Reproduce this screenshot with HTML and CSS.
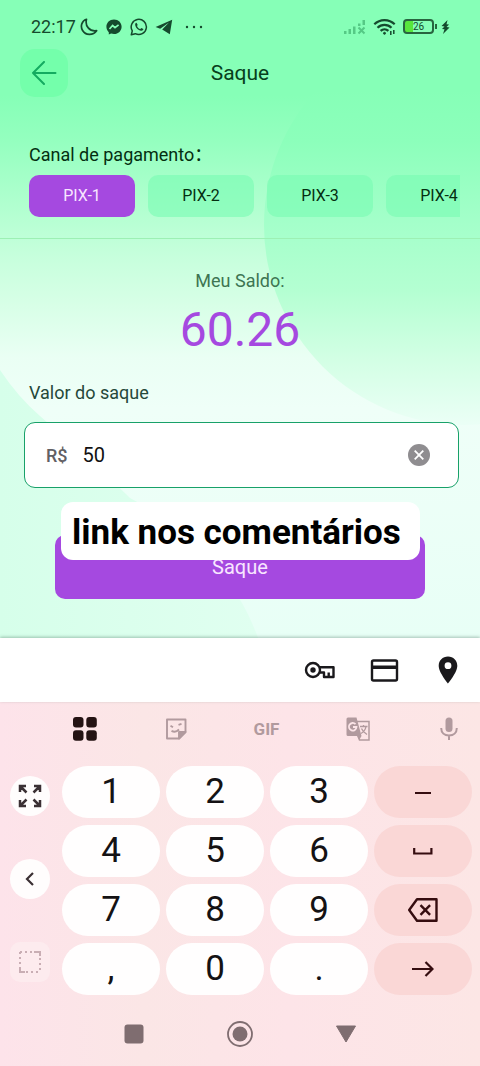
FILE: index.html
```html
<!DOCTYPE html>
<html lang="pt-BR">
<head>
<meta charset="utf-8">
<meta name="viewport" content="width=device-width, initial-scale=1">
<title>Saque</title>
<link rel="stylesheet" href="styles.css">
</head>
<body>
<div class="screen">
  <main class="app">
    <svg class="backdrop" viewBox="0 0 480 638" preserveAspectRatio="none" aria-hidden="true">
      <defs>
        <linearGradient id="orb" gradientUnits="userSpaceOnUse" x1="0" y1="90" x2="0" y2="425">
          <stop offset="0" stop-color="#86ffb7"/>
          <stop offset=".15" stop-color="#8cffbb"/>
          <stop offset=".4" stop-color="#a4ffca"/>
          <stop offset=".6" stop-color="#b4ffd2"/>
          <stop offset=".8" stop-color="#d2ffe4"/>
          <stop offset="1" stop-color="#ebfff6"/>
        </linearGradient>
        <linearGradient id="wave" x1="0" y1="0" x2="1" y2="0">
          <stop offset="0" stop-color="#d6ffea"/>
          <stop offset="1" stop-color="#e0fff0"/>
        </linearGradient>
      </defs>
      <circle cx="464" cy="225" r="200" fill="url(#orb)"/>
      <path d="M0 370Q18 397 40 416C75 446 110 478 130 498C190 530 238 580 258 638H0Z" fill="url(#wave)"/>
    </svg>

    <div class="status">
      <div class="status-group">
        <span class="clock">22:17</span>
        <svg width="18" height="18" viewBox="0 0 18 18" fill="none" stroke="currentColor" stroke-width="1.7" stroke-linejoin="round"><path d="M6.500 1.300C1.500 3 .2 8.500 2.600 12.500C5.500 17.400 13 17.800 16.600 12.700C9.500 13.800 4.800 8 6.500 1.300Z"/></svg>
        <svg class="gap-icon" width="16" height="16" viewBox="0 0 16 16"><path fill="currentColor" d="M8 .5C3.600.5.400 3.700.400 7.800c0 2.200.900 4.100 2.400 5.400v2.200l2.300-.8c.9.300 1.900.5 2.900.5 4.400 0 7.600-3.200 7.600-7.300S12.400.5 8 .5Z"/><path d="M3.500 10 6.600 6.500 9 8.700 12.600 5.800" fill="none" stroke="#88ffb8" stroke-width="1.700"/></svg>
        <svg class="gap-icon" width="18" height="18" viewBox="0 0 18 18"><path d="M1.300 16.700 2.300 12.900A7.600 7.600 0 1 1 5.300 15.700Z" fill="none" stroke="currentColor" stroke-width="1.500" stroke-linejoin="round"/><path d="M6.500 4.700c-1 .2-1.500 1.100-1.300 2.400.5 2.900 3 5.400 5.900 5.700 1.300.1 2.200-.5 2.300-1.700l-2.100-1.100-1 1.100C8.700 10.500 7.600 9.300 7 7.900l.7-1Z" fill="currentColor"/></svg>
        <svg class="telegram" width="18" height="16" viewBox="0 0 18 16"><path fill="currentColor" d="M17.200.7.600 8.100l4.600 1.600L14 3.500 7.200 10.600l7.600 4.700Z"/></svg>
        <svg class="dots" width="18" height="4" viewBox="0 0 18 4" fill="currentColor"><circle cx="2" cy="2" r="1.200"/><circle cx="9" cy="2" r="1.200"/><circle cx="16" cy="2" r="1.200"/></svg>
      </div>
      <div class="status-group">
        <svg class="signal" width="24" height="16" viewBox="0 0 24 16" fill="currentColor"><path d="M1 12h2.500v3H1zM5.500 10H8v5H5.500zM10 7.500h2.500V15H10zM15 4.500h2.500V7H15zM19.500 1H22v5h-2.500z"/><path d="m15.500 8.500 6 6m0-6-6 6" stroke="currentColor" stroke-width="2"/></svg>
        <svg class="wifi" width="24" height="18" viewBox="0 0 24 18" fill="none" stroke="currentColor" stroke-width="2.200"><path d="M1.300 6.300a14.500 14.500 0 0 1 20.400 0M4.500 9.700a10 10 0 0 1 14 0M7.600 12.900a5.600 5.600 0 0 1 7.800 0"/><circle cx="11.500" cy="15.300" r="1" fill="currentColor" stroke-width="1"/><path d="M17.800 13v4m3-5v4" stroke-width="1.500"/></svg>
        <span class="battery"><span class="battery-level">26</span></span>
        <svg class="bolt" width="9" height="14" viewBox="0 0 9 14"><path fill="currentColor" d="M6.500 0 .500 6l3 .6L1 9l2.500.2L2 14l6.500-6.500-3-.5L8 4.500l-2.500-.3Z"/></svg>
      </div>
    </div>

    <header class="topbar">
      <button class="back" type="button" aria-label="Voltar">
        <svg width="26" height="24" viewBox="0 0 26 24" fill="none" stroke="currentColor" stroke-width="2" stroke-linecap="round" stroke-linejoin="round"><path d="M24.500 12H2M13 1 2 12l11 11"/></svg>
      </button>
      <h1 class="title">Saque</h1>
    </header>

    <section class="channels">
      <h2 class="label channel-label">Canal de pagamento<span class="colon" lang="zh-CN">：</span></h2>
      <div class="chips">
        <button class="chip chip-active" type="button">PIX-1</button>
        <button class="chip" type="button">PIX-2</button>
        <button class="chip" type="button">PIX-3</button>
        <button class="chip" type="button">PIX-4</button>
      </div>
    </section>

    <section class="balance">
      <p class="balance-label">Meu Saldo:</p>
      <p class="balance-value">60.26</p>
    </section>

    <form class="withdraw">
      <label class="label amount-label" for="amount">Valor do saque</label>
      <div class="field">
        <span class="currency">R$</span>
        <input class="amount" id="amount" type="text" inputmode="decimal" value="50">
        <button class="clear" type="button" aria-label="Limpar">
          <svg width="22" height="22" viewBox="0 0 22 22"><circle cx="11" cy="11" r="11" fill="#8f8d90"/><path d="m6.700 6.700 8.600 8.600m0-8.600-8.600 8.600" stroke="#fff" stroke-width="1.800"/></svg>
        </button>
      </div>
      <div class="submit-area">
        <button class="submit" type="button">Saque</button>
        <p class="caption">link nos comentários</p>
      </div>
    </form>
  </main>

  <div class="autofill">
    <button class="bare" type="button" aria-label="Senhas">
      <svg width="32" height="32" viewBox="0 0 32 32" fill="none" stroke="currentColor" stroke-width="2.400" stroke-linejoin="round"><path d="M15.300 13.300H29.500V23H20v-4.500h-4.700M24.700 22.500v-4"/><circle cx="9" cy="16" r="7"/><circle cx="9" cy="16" r="2.700" fill="currentColor" stroke="none"/></svg>
    </button>
    <button class="bare" type="button" aria-label="Cartões">
      <svg width="32" height="32" viewBox="0 0 32 32"><rect x="4" y="6.500" width="25" height="20" rx="1.500" fill="none" stroke="currentColor" stroke-width="2.400"/><path d="M4 11.500h25v3.500H4z" fill="currentColor"/></svg>
    </button>
    <button class="bare" type="button" aria-label="Endereços">
      <svg width="32" height="32" viewBox="0 0 32 32"><path fill="currentColor" fill-rule="evenodd" d="M16 2.500c-5.400 0-9.300 4-9.300 9.200C6.700 18.500 16 29.500 16 29.500s9.300-11 9.300-17.800c0-5.200-3.900-9.200-9.300-9.200Zm0 5.800a3.400 3.400 0 1 1 0 6.800 3.400 3.400 0 0 1 0-6.800Z"/></svg>
    </button>
  </div>

  <section class="keyboard" aria-label="Teclado">
    <div class="tools">
      <button class="bare tool-on" type="button" aria-label="Menu">
        <svg width="24" height="24" viewBox="0 0 24 24" fill="currentColor"><rect width="10.500" height="10.500" rx="3"/><rect x="13.300" width="10.500" height="10.500" rx="3"/><rect y="13.300" width="10.500" height="10.500" rx="3"/><rect x="13.300" y="13.300" width="10.500" height="10.500" rx="3"/></svg>
      </button>
      <button class="bare" type="button" aria-label="Figurinhas">
        <svg width="22" height="22" viewBox="0 0 22 22" fill="none" stroke="currentColor" stroke-width="1.900" stroke-linejoin="round"><path d="M2 1.500h18.500V14L14 20.500H2Z"/><path d="M20.500 14H14v6.500Z" fill="currentColor"/><path d="M5.500 7.800 8 9.300M13.500 6.800l3-1M6.500 12.800c3 1.600 5.500.8 7.500-1.300"/></svg>
      </button>
      <button class="bare gif" type="button">GIF</button>
      <button class="bare" type="button" aria-label="Traduzir">
        <svg width="24" height="24" viewBox="0 0 24 24"><path d="M9 4.500h14V23H13.500L11 17" fill="none" stroke="currentColor" stroke-width="1.500"/><path fill="currentColor" d="M2 .5h8.500L15.500 19H2A1.500 1.500 0 0 1 .500 17.500V2A1.500 1.500 0 0 1 2 .5ZM11.500 19h4l-2 3.500Z"/><path d="M9.500 7.200a3.800 3.800 0 1 0 1 2.800H7" fill="none" stroke="#fce5e8" stroke-width="1.800"/><path d="M14 9.500h7.500M17.500 8v1.500M20 9.500c-.5 3-2.500 5.500-5 7M15.500 11.500c1 2.500 3 4.500 5.500 6" fill="none" stroke="currentColor" stroke-width="1.300"/></svg>
      </button>
      <button class="bare" type="button" aria-label="Voz">
        <svg width="18" height="24" viewBox="0 0 18 24"><rect x="5.500" y=".5" width="7" height="14.500" rx="3.500" fill="currentColor"/><path d="M1.200 11c0 4.700 3.200 7.500 7.800 7.500s7.800-2.800 7.800-7.500M9 18.500V23" fill="none" stroke="currentColor" stroke-width="2"/></svg>
      </button>
    </div>

    <div class="pad">
      <div class="side">
        <button class="side-key" type="button" aria-label="Redimensionar">
          <svg width="24" height="24" viewBox="0 0 24 24" fill="none" stroke="currentColor" stroke-width="2.500"><path d="M2 8V2h6M2 2l6.500 6.500M16 2h6v6M22 2l-6.500 6.500M2 16v6h6M2 22l6.500-6.500M16 22h6v-6M22 22l-6.500-6.500"/></svg>
        </button>
        <button class="side-key" type="button" aria-label="Recolher">
          <svg width="10" height="14" viewBox="0 0 10 14" fill="none" stroke="currentColor" stroke-width="2.200"><path d="M8 1 2 7l6 6"/></svg>
        </button>
        <button class="side-key side-key-faint" type="button" aria-label="Flutuante">
          <svg width="24" height="24" viewBox="0 0 24 24" fill="none" stroke="currentColor" stroke-width="2"><path d="M2 2h14M2 2v14M8 22h14M22 8v14" stroke-dasharray="2 3"/><path d="M16 2h6v4M2 17v5h5"/></svg>
        </button>
      </div>
      <div class="keys">
        <button class="key" type="button">1</button>
        <button class="key" type="button">2</button>
        <button class="key" type="button">3</button>
        <button class="key key-fn" type="button" aria-label="Menos"><svg width="16" height="4" viewBox="0 0 16 4"><path d="M0 3h16" stroke="currentColor" stroke-width="2"/></svg></button>
        <button class="key" type="button">4</button>
        <button class="key" type="button">5</button>
        <button class="key" type="button">6</button>
        <button class="key key-fn" type="button" aria-label="Espaço"><svg width="20" height="8" viewBox="0 0 20 8" fill="none" stroke="currentColor" stroke-width="2.200"><path d="M1.200 1v5.500h17.200V1"/></svg></button>
        <button class="key" type="button">7</button>
        <button class="key" type="button">8</button>
        <button class="key" type="button">9</button>
        <button class="key key-fn" type="button" aria-label="Apagar"><svg width="30" height="24" viewBox="0 0 30 24" fill="none" stroke="currentColor" stroke-width="2.400" stroke-linejoin="round"><path d="M9 1.200h19.500v21.600H9L1.200 12ZM12.500 7.200l9.600 9.600m0-9.600-9.600 9.600"/></svg></button>
        <button class="key" type="button">,</button>
        <button class="key" type="button">0</button>
        <button class="key" type="button">.</button>
        <button class="key key-fn" type="button" aria-label="Avançar"><svg width="22" height="16" viewBox="0 0 22 16" fill="none" stroke="currentColor" stroke-width="2.200"><path d="M0 8h20.500M13.500 1l7 7-7 7"/></svg></button>
      </div>
    </div>

    <nav class="nav">
      <button class="bare" type="button" aria-label="Recentes"><svg width="20" height="20" viewBox="0 0 20 20"><rect x=".5" y=".5" width="19" height="19" rx="3" fill="currentColor"/></svg></button>
      <button class="bare" type="button" aria-label="Início"><svg width="26" height="26" viewBox="0 0 26 26"><circle cx="13" cy="13" r="12" fill="none" stroke="currentColor" stroke-width="1.800"/><circle cx="13" cy="13" r="7.500" fill="currentColor"/></svg></button>
      <button class="bare" type="button" aria-label="Ocultar teclado"><svg width="22" height="18" viewBox="0 0 22 18"><path d="M1.500 1h19L11 17Z" fill="currentColor" stroke="currentColor" stroke-linejoin="round"/></svg></button>
    </nav>
  </section>
</div>
</body>
</html>
```

FILE: styles.css
```css
* {
  box-sizing: border-box;
}

body {
  margin: 0;
  background: #fce5e8;
  font-family: Roboto, "Noto Sans CJK SC", sans-serif;
}

h1, h2, p {
  margin: 0;
  font-weight: 400;
}

button {
  border: 0;
  padding: 0;
  font-family: inherit;
  cursor: pointer;
}

svg {
  display: block;
  flex: none;
}

.screen {
  display: flex;
  flex-direction: column;
  min-height: 100vh;
}

.app {
  position: relative;
  z-index: 0;
  padding-bottom: 39px;
  background: linear-gradient(#86ffb7 15%, #94ffbf 22%, #b0ffcf 32%, #c6ffdc 40%, #d8ffe7 48%, #eafff4 56%, #effff8 64%, #e8fff6 100%);
}

.backdrop {
  position: absolute;
  inset: 0;
  z-index: -1;
  width: 100%;
  height: 100%;
}

.status {
  display: flex;
  justify-content: space-between;
  align-items: center;
  padding: 16px 30px 12px 31px;
  color: #154a2d;
}

.status-group {
  display: flex;
  align-items: center;
}

.clock {
  margin-right: 4px;
  font-size: 18px;
  line-height: 21px;
}

.gap-icon {
  margin-left: 8px;
}

.telegram {
  margin-left: 7px;
}

.dots {
  margin-left: 12px;
}

.signal {
  color: #55c985;
}

.wifi {
  margin-left: 6px;
}

.battery {
  position: relative;
  width: 31px;
  height: 15px;
  margin-left: 6px;
  border: 2px solid #28643f;
  border-radius: 4px;
  background: linear-gradient(90deg, #58e63c 8px, transparent 8px);
  text-align: center;
}

.battery::after {
  content: "";
  position: absolute;
  top: 3px;
  right: -5px;
  width: 2px;
  height: 5px;
  background: #28643f;
}

.battery-level {
  display: block;
  font-size: 10px;
  line-height: 11px;
}

.bolt {
  margin-left: 7px;
}

.topbar {
  display: grid;
  grid-template-columns: 48px 1fr 48px;
  align-items: center;
  padding: 0 20px;
}

.back {
  display: grid;
  place-items: center;
  height: 48px;
  border-radius: 15px;
  background: #74ffab;
  color: #14ab60;
}

.title {
  color: #06401c;
  font-size: 21px;
  line-height: 24px;
  text-align: center;
}

.channels {
  padding: 46px 20px 21px 29px;
  border-bottom: 1px solid #9df0b4;
}

.label {
  display: block;
  font-size: 18px;
  line-height: 24px;
}

.channel-label {
  color: #042e10;
}

.colon {
  font-family: "Noto Sans CJK SC", sans-serif;
  line-height: 1;
}

.chips {
  display: flex;
  gap: 13px;
  margin-top: 8px;
  overflow: hidden;
}

.chip {
  flex: none;
  width: 106px;
  height: 42px;
  padding-bottom: 2px;
  border-radius: 10px;
  background: rgba(120, 252, 178, .6);
  color: #042e10;
  font-size: 16px;
}

.chip-active {
  background: #a549e0;
  color: #f8e6ff;
}

.balance {
  padding-top: 31px;
  text-align: center;
}

.balance-label {
  color: #3d7552;
  font-size: 18px;
  line-height: 22px;
}

.balance-value {
  margin-top: 9px;
  color: #a549e0;
  font-size: 48px;
  line-height: 58px;
}

.withdraw {
  padding: 22px 21px 0 24px;
}

.amount-label {
  padding-left: 5px;
  color: #25483a;
}

.field {
  display: flex;
  align-items: center;
  height: 66px;
  margin-top: 17px;
  padding: 0 28px 0 21px;
  border: 1px solid #18a169;
  border-radius: 11px;
  background: #fff;
}

.currency {
  color: #626064;
  font-size: 18px;
  font-weight: 500;
}

.amount {
  flex: 1;
  min-width: 0;
  margin-left: 15px;
  padding: 0;
  border: 0;
  outline: 0;
  background: none;
  color: #111;
  font-family: inherit;
  font-size: 20px;
}

.clear {
  border-radius: 50%;
  background: none;
}

.submit-area {
  position: relative;
  margin: 47px 34px 0 31px;
}

.submit {
  display: block;
  width: 100%;
  height: 64px;
  border-radius: 10px;
  background: #a549e0;
  color: #f8e6ff;
  font-size: 20px;
}

.caption {
  position: absolute;
  top: -33px;
  left: 6px;
  right: 5px;
  padding: 3px 0 0 11px;
  border-radius: 12px;
  background: #fff;
  color: #000;
  font-size: 35px;
  font-weight: 700;
  line-height: 55px;
  white-space: nowrap;
}

.bare {
  display: grid;
  place-items: center;
  background: none;
  color: inherit;
}

.autofill {
  position: relative;
  display: flex;
  justify-content: flex-end;
  align-items: center;
  gap: 32px;
  height: 64px;
  padding-right: 16px;
  background: #fff;
  box-shadow: 0 -1px 3px rgba(40, 80, 60, .35);
  color: #1a191c;
}

.keyboard {
  display: flex;
  flex: 1;
  flex-direction: column;
  overflow: hidden;
  background: linear-gradient(90deg, #fde3ea, #fbe6e6 30%, #fde4e8 60%, #fce6e5);
}

.tools {
  display: grid;
  grid-template-columns: repeat(5, 1fr);
  height: 54px;
  margin: 0 -14px 0 39px;
  color: #b19a9e;
}

.tool-on {
  color: #241313;
}

.gif {
  font-size: 17px;
  font-weight: 700;
}

.pad {
  display: flex;
  gap: 12px;
  padding: 10px 8px 0 10px;
}

.side {
  display: flex;
  flex-direction: column;
  gap: 43px;
  padding-top: 10px;
}

.side-key {
  display: grid;
  place-items: center;
  width: 40px;
  height: 40px;
  border-radius: 50%;
  background: #fffdfd;
  color: #3b3034;
}

.side-key-faint {
  border-radius: 10px;
  background: #fdebee;
  color: #c9aeb4;
}

.keys {
  display: grid;
  flex: 1;
  grid-template-columns: repeat(4, 1fr);
  grid-auto-rows: 52px;
  gap: 7px 6px;
}

.key {
  display: grid;
  place-items: center;
  border-radius: 26px;
  background: #fffefe;
  color: #141214;
  font-size: 35px;
  line-height: 40px;
}

.key-fn {
  background: #fad7d6;
  color: #350d10;
}

.nav {
  display: grid;
  grid-template-columns: repeat(3, 106px);
  justify-content: center;
  padding: 26px 0 18px;
  color: #7f6d70;
}
```
